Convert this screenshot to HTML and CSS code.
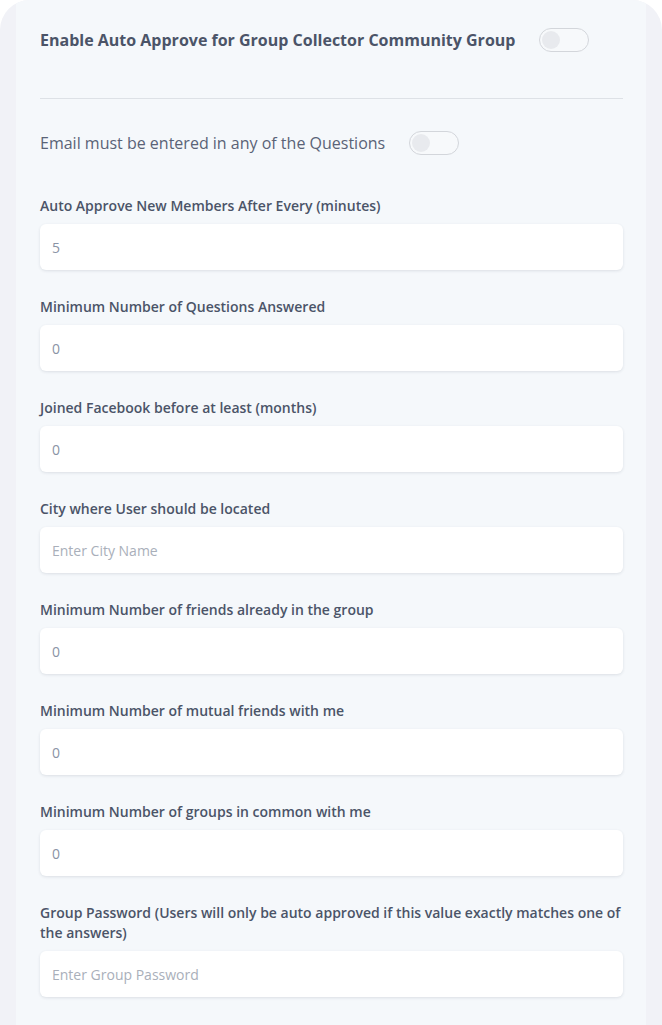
FILE: index.html
```html
<!DOCTYPE html>
<html lang="en">
<head>
<meta charset="utf-8">
<title>Auto Approve Settings</title>
<link rel="stylesheet" href="styles.css">
</head>
<body>
<div class="frame">
  <div class="panel">
    <div class="toggle-row">
      <span class="heading">Enable Auto Approve for Group Collector Community Group</span>
      <span class="switch"><span class="knob"></span></span>
    </div>
    <hr class="divider">
    <div class="toggle-row email-row">
      <span class="email-label">Email must be entered in any of the Questions</span>
      <span class="switch"><span class="knob"></span></span>
    </div>
    <div class="fields">
      <div class="field">
        <label class="label">Auto Approve New Members After Every (minutes)</label>
        <div class="input value">5</div>
      </div>
      <div class="field">
        <label class="label">Minimum Number of Questions Answered</label>
        <div class="input value">0</div>
      </div>
      <div class="field">
        <label class="label">Joined Facebook before at least (months)</label>
        <div class="input value">0</div>
      </div>
      <div class="field">
        <label class="label">City where User should be located</label>
        <div class="input placeholder">Enter City Name</div>
      </div>
      <div class="field">
        <label class="label">Minimum Number of friends already in the group</label>
        <div class="input value">0</div>
      </div>
      <div class="field">
        <label class="label">Minimum Number of mutual friends with me</label>
        <div class="input value">0</div>
      </div>
      <div class="field">
        <label class="label">Minimum Number of groups in common with me</label>
        <div class="input value">0</div>
      </div>
      <div class="field">
        <label class="label">Group Password (Users will only be auto approved if this value exactly matches one of the answers)</label>
        <div class="input placeholder">Enter Group Password</div>
      </div>
    </div>
  </div>
</div>
</body>
</html>
```

FILE: styles.css
```css
html, body {
  margin: 0;
  padding: 0;
  background: #ffffff;
}

body {
  font-family: "Open Sans", "Noto Sans", sans-serif;
  color: #4b5468;
}

.frame {
  background: #f1f2f7;
  border-radius: 30px 30px 0 0;
  padding: 0 16px;
  height: 1025px;
  overflow: hidden;
  box-sizing: border-box;
}

.panel {
  background: #f5f8fb;
  height: 100%;
  padding: 28px 23px 0 24px;
  box-sizing: border-box;
}

.toggle-row {
  display: flex;
  align-items: center;
  gap: 24px;
  height: 24px;
}

.heading {
  font-size: 16px;
  font-weight: 700;
  color: #4b5468;
}

.switch {
  position: relative;
  flex: none;
  width: 48px;
  height: 22px;
  border: 1px solid #d3d6db;
  border-radius: 12px;
  background: #f7f9fb;
}

.knob {
  position: absolute;
  left: 2px;
  top: 2px;
  width: 18px;
  height: 18px;
  border-radius: 50%;
  background: #e8eaee;
}

.divider {
  border: 0;
  border-top: 1px solid #dde1e6;
  margin: 46px 0 32px;
}

.email-label {
  font-size: 16px;
  font-weight: 400;
  color: #5a6377;
}

.fields {
  display: flex;
  flex-direction: column;
  gap: 26.5px;
  margin-top: 40.5px;
}

.field {
  display: flex;
  flex-direction: column;
}

.label {
  font-size: 14px;
  font-weight: 600;
  line-height: 20px;
  color: #4b5468;
  margin-bottom: 8.5px;
}

.input {
  height: 46px;
  box-sizing: border-box;
  background: #ffffff;
  border-radius: 6px;
  box-shadow: 0 1px 3px rgba(40, 50, 70, 0.12);
  padding: 0 12px;
  display: flex;
  align-items: center;
  font-size: 14px;
}

.value {
  color: #8a93a5;
}

.placeholder {
  color: #a9afba;
}
```
